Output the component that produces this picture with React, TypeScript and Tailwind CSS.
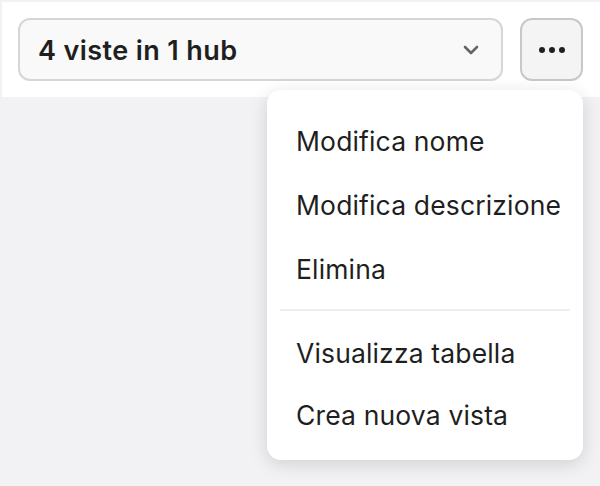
import { useState } from 'react';

const GRUPPI = [
  ['Modifica nome', 'Modifica descrizione', 'Elimina'],
  ['Visualizza tabella', 'Crea nuova vista'],
];

export default function App() {
  const [open] = useState(true);

  return (
    <div className="relative w-[600px] h-[486px] bg-[#f2f2f4] pt-[2px] pl-[2px] font-['Inter',sans-serif] text-[#1f1f1f] overflow-hidden">
      {/* Barra superiore */}
      <div className="h-[95px] bg-white flex items-center pl-[16px] gap-[17px]">
        <button className="w-[485px] h-[63px] rounded-[12px] border-2 border-[#d6d6d6] bg-[#f9f9f9] flex items-center justify-between pl-[18px] pr-[22px]">
          <span className="text-[27px] font-semibold tracking-[0.4px] leading-none pt-[2px]">4 viste in 1 hub</span>
          <svg width="16" height="10" viewBox="0 0 16 10" fill="none">
            <path d="M2 2l6 6 6-6" stroke="#666" strokeWidth="2.6" strokeLinecap="round" strokeLinejoin="round" />
          </svg>
        </button>
        <button className="w-[63px] h-[63px] rounded-[12px] border-2 border-[#c8c8c8] bg-[#f4f4f4] flex items-center justify-center gap-[4px]">
          <span className="w-[6px] h-[6px] rounded-full bg-[#1f1f1f]" />
          <span className="w-[6px] h-[6px] rounded-full bg-[#1f1f1f]" />
          <span className="w-[6px] h-[6px] rounded-full bg-[#1f1f1f]" />
        </button>
      </div>

      {/* Menu */}
      {open && (
        <div className="absolute top-[90px] left-[267px] w-[316px] bg-white rounded-[14px] shadow-[0_4px_18px_rgba(0,0,0,0.14)] pt-[19px] pb-[14px]">
          {GRUPPI.map((gruppo, gi) => (
            <div key={gi}>
              {gi > 0 && <div className="mx-[13px] mt-[8px] mb-[11px] h-[2px] bg-[#eeeeee]" />}
              {gruppo.map((voce) => (
                <div key={voce} className={`${gi === 0 ? 'h-[64px]' : 'h-[62px]'} flex items-center pl-[29px] text-[26.5px] tracking-[0.15px] leading-none`}>
                  {voce}
                </div>
              ))}
            </div>
          ))}
        </div>
      )}
    </div>
  );
}
